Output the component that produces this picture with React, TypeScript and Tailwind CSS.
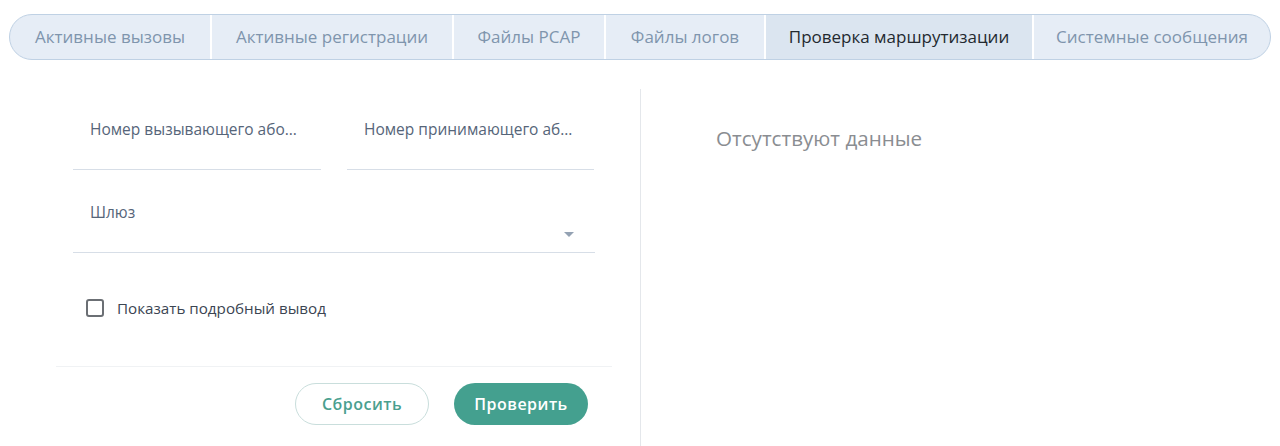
import { useState } from 'react';

const tabs = [
  { label: 'Активные вызовы', w: 'w-[200px]' },
  { label: 'Активные регистрации', w: 'w-[242px]' },
  { label: 'Файлы PCAP', w: 'w-[152px]' },
  { label: 'Файлы логов', w: 'w-[160px]' },
  { label: 'Проверка маршрутизации', w: 'w-[268px]' },
  { label: 'Системные сообщения', w: 'flex-1' },
];

const Field = ({ label, className = '' }: { label: string; className?: string }) => (
  <div className={`border-b border-[#d7dee7] h-[81px] pt-[29px] ${className}`}>
    <div className="px-[17px] text-[15.5px] text-[#566579] whitespace-nowrap">{label}</div>
  </div>
);

export default function App() {
  const [active] = useState(4);

  return (
    <div className="bg-white w-[1280px] h-[446px] overflow-hidden" style={{ fontFamily: '"Open Sans", "Noto Sans", sans-serif' }}>
      <div className="pt-[14px] px-[9px]">
        <div className="flex h-[46px] rounded-full border border-[#bfd1e4] overflow-hidden bg-[#e6edf6]">
          {tabs.map((tab, i) => (
            <div
              key={tab.label}
              className={`${tab.w} flex items-center justify-center text-[17px] ${i > 0 ? 'border-l-2 border-white' : ''} ${
                i === active ? 'bg-[#dbe5f0] text-[#23292f]' : 'text-[#7f95ad]'
              }`}
            >
              {tab.label}
            </div>
          ))}
        </div>
      </div>

      <div className="flex mt-[29px] h-[357px]">
        <div className="w-[641px] pl-[56px] border-r border-[#e4e7eb] flex flex-col">
          <div className="w-[556px] px-[17px]">
            <div className="flex gap-[26px]">
              <Field label="Номер вызывающего або…" className="w-[248px]" />
              <Field label="Номер принимающего аб…" className="w-[247px]" />
            </div>
            <div className="border-b border-[#d7dee7] h-[83px] pt-[31px] relative">
              <div className="px-[17px] text-[15.5px] text-[#566579]">Шлюз</div>
              <div className="absolute right-[21px] top-[62px] w-0 h-0 border-l-[5px] border-r-[5px] border-t-[5px] border-l-transparent border-r-transparent border-t-[#94a2b3]" />
            </div>
            <label className="flex items-center gap-[13px] mt-[44px] pl-[13px]">
              <span className="w-[18px] h-[18px] rounded-[3px] border-2 border-[#6b6f74] bg-white" />
              <span className="text-[15.2px] text-[#3b4552]">Показать подробный вывод</span>
            </label>
          </div>
          <div className="w-[556px] border-t border-[#f0f2f4] mt-[46px] flex justify-end gap-[25px] pt-[16px] pr-[24px]">
            <button className="w-[134px] h-[42px] rounded-full border border-[#c9dedc] text-[#4a9f8f] text-[16px] font-semibold tracking-[0.5px] bg-white">
              Сбросить
            </button>
            <button className="w-[134px] h-[42px] rounded-full bg-[#44a08f] text-white text-[16px] font-semibold tracking-[0.5px]">
              Проверить
            </button>
          </div>
        </div>
        <div className="flex-1 pl-[75px] pt-[34px]">
          <div className="text-[20.6px] text-[#8a8d91]">Отсутствуют данные</div>
        </div>
      </div>
    </div>
  );
}
